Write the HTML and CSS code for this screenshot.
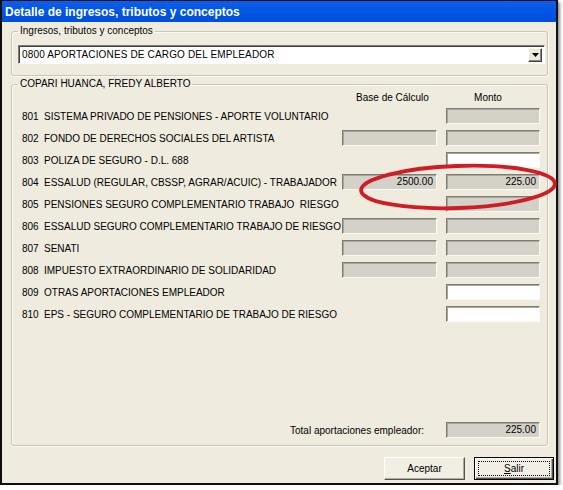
FILE: index.html
```html
<!DOCTYPE html>
<html lang="es">
<head>
<meta charset="utf-8">
<title>Detalle de ingresos, tributos y conceptos</title>
<link rel="stylesheet" href="styles.css">
</head>
<body>
<div class="window">
  <div class="titlebar"><span class="title">Detalle de ingresos, tributos y conceptos</span></div>
  <div class="client">
    <fieldset class="group g1">
      <legend>Ingresos, tributos y conceptos</legend>
      <div class="combo">
        <span class="combo-text">0800 APORTACIONES DE CARGO DEL EMPLEADOR</span>
        <span class="combo-btn"><svg width="7" height="4" viewBox="0 0 7 4"><path d="M0 0h7L3.5 4z" fill="#000"/></svg></span>
      </div>
    </fieldset>
    <fieldset class="group g2">
      <legend>COPARI HUANCA, FREDY ALBERTO</legend>
      <div class="grid head">
        <span></span><span></span>
        <span class="h-base">Base de Cálculo</span>
        <span class="h-monto">Monto</span>
      </div>
      <div class="grid row"><span>801</span><span>SISTEMA PRIVADO DE PENSIONES - APORTE VOLUNTARIO</span><span></span><span class="fld grey"></span></div>
      <div class="grid row"><span>802</span><span>FONDO DE DERECHOS SOCIALES DEL ARTISTA</span><span class="fld grey base"></span><span class="fld grey"></span></div>
      <div class="grid row"><span>803</span><span>POLIZA DE SEGURO - D.L. 688</span><span></span><span class="fld white"></span></div>
      <div class="grid row"><span>804</span><span>ESSALUD (REGULAR, CBSSP, AGRAR/ACUIC) - TRABAJADOR</span><span class="fld grey base">2500.00</span><span class="fld grey">225.00</span></div>
      <div class="grid row"><span>805</span><span>PENSIONES SEGURO COMPLEMENTARIO TRABAJO&nbsp; RIESGO</span><span></span><span class="fld grey"></span></div>
      <div class="grid row"><span>806</span><span>ESSALUD SEGURO COMPLEMENTARIO TRABAJO DE RIESGO</span><span class="fld grey base"></span><span class="fld grey"></span></div>
      <div class="grid row"><span>807</span><span>SENATI</span><span class="fld grey base"></span><span class="fld grey"></span></div>
      <div class="grid row"><span>808</span><span>IMPUESTO EXTRAORDINARIO DE SOLIDARIDAD</span><span class="fld grey base"></span><span class="fld grey"></span></div>
      <div class="grid row"><span>809</span><span>OTRAS APORTACIONES EMPLEADOR</span><span></span><span class="fld white"></span></div>
      <div class="grid row"><span>810</span><span>EPS - SEGURO COMPLEMENTARIO DE TRABAJO DE RIESGO</span><span></span><span class="fld white"></span></div>
      <div class="total">
        <span class="total-label">Total aportaciones empleador:</span>
        <span class="fld grey total-fld">225.00</span>
      </div>
    </fieldset>
    <div class="buttons">
      <button class="btn">Aceptar</button>
      <button class="btn default"><span class="focus"><u>S</u>alir</span></button>
    </div>
  </div>
  <svg class="mark" width="212" height="56" viewBox="0 0 212 56"><ellipse cx="105" cy="28" rx="97" ry="21" transform="rotate(-2 105 28)" fill="none" stroke="#d01c24" stroke-width="3.8"/></svg>
</div>
</body>
</html>
```
FILE: styles.css
```css
html, body {
  margin: 0;
  padding: 0;
  background: #ffffff;
}
body {
  font-family: "Liberation Sans", Arial, sans-serif;
  font-size: 10px;
  color: #000;
}
.window {
  position: relative;
  width: 554px;
  height: 482px;
  border: 2px solid #101010;
  border-top-width: 1px;
  background: #efebde;
  box-shadow: 2px 2px 3px rgba(0, 0, 0, 0.45);
  display: flex;
  flex-direction: column;
}
.titlebar {
  height: 21px;
  background: linear-gradient(#0b5fea, #0054e2 60%, #0050da);
  display: flex;
  align-items: center;
  padding-left: 3px;
}
.title {
  color: #fff;
  font-weight: bold;
  font-size: 12px;
  line-height: 14px;
}
.client {
  flex: 1;
  padding: 3px 0 0 9px;
  display: flex;
  flex-direction: column;
}
.group {
  box-sizing: border-box;
  width: 537px;
  margin: 0;
  min-width: 0;
  border: 1px solid #c9c6b6;
  border-radius: 3px;
  box-shadow: inset 1px 1px 0 #fbfaf6, 1px 1px 0 #fbfaf6;
}
.group legend {
  padding: 0 2px;
  font-size: 10px;
  line-height: 12px;
}
.g1 {
  padding: 8px 0 11px 6px;
}
.g1 legend {
  margin-left: 0;
}
.combo {
  box-sizing: border-box;
  width: 527px;
  height: 19px;
  background: #fff;
  border-top: 1px solid #7f7d76;
  border-left: 1px solid #7f7d76;
  border-right: 1px solid #fff;
  border-bottom: 1px solid #fff;
  box-shadow: inset 1px 1px 0 #3f3f3f;
  display: flex;
  align-items: center;
  justify-content: space-between;
  padding: 0 2px 0 3px;
}
.combo-text {
  line-height: 12px;
  letter-spacing: 0.15px;
}
.combo-btn {
  box-sizing: border-box;
  width: 14px;
  height: 14px;
  background: #ece9d8;
  border-top: 1px solid #fff;
  border-left: 1px solid #fff;
  border-right: 1px solid #404040;
  border-bottom: 1px solid #404040;
  box-shadow: inset -1px -1px 0 #8d8a80;
  display: flex;
  align-items: center;
  justify-content: center;
}
.g2 {
  margin-top: 2px;
  padding: 0 0 7px 10px;
}
.g2 legend {
  margin-left: -4px;
}
.grid {
  display: grid;
  grid-template-columns: 22px 298px 104px 94px;
  align-items: center;
  white-space: nowrap;
}
.head {
  height: 15px;
}
.h-base {
  width: 95px;
  text-align: center;
  padding-left: 6px;
  box-sizing: border-box;
}
.h-monto {
  text-align: center;
  padding-right: 10px;
}
.row {
  height: 22px;
}
.fld {
  box-sizing: border-box;
  display: block;
  height: 16px;
  border-top: 1px solid #7d7b74;
  border-left: 1px solid #7d7b74;
  border-right: 1px solid #fbfaf6;
  border-bottom: 1px solid #fbfaf6;
  box-shadow: inset 1px 1px 0 #a9a69c;
  text-align: right;
  padding: 0 3px 0 0;
  line-height: 14px;
}
.fld.base {
  width: 95px;
}
.grey {
  background: #d4d1c9;
}
.white {
  background: #fff;
}
.total {
  margin-top: 97px;
  display: flex;
  justify-content: flex-end;
  align-items: center;
  width: 518px;
  height: 16px;
}
.total-label {
  margin-right: 22px;
}
.total-fld {
  width: 94px;
}
.buttons {
  margin-top: 11px;
  display: flex;
  justify-content: flex-end;
  gap: 9px;
  padding-right: 2px;
}
.btn {
  box-sizing: border-box;
  width: 81px;
  height: 23px;
  font-family: "Liberation Sans", Arial, sans-serif;
  font-size: 10px;
  color: #000;
  background: #f1eee4;
  border-top: 1px solid #fff;
  border-left: 1px solid #fff;
  border-right: 1px solid #55534d;
  border-bottom: 1px solid #55534d;
  box-shadow: inset -1px -1px 0 #aeaa9e;
  padding: 0;
}
.btn.default {
  width: 80px;
  border: 1px solid #000;
  box-shadow: inset 1px 1px 0 #fff, inset -1px -1px 0 #55534d, inset -2px -2px 0 #aeaa9e;
  padding: 3px;
}
.focus {
  display: flex;
  align-items: center;
  justify-content: center;
  height: 100%;
  border: 1px dotted #000;
  box-sizing: border-box;
}
.mark {
  position: absolute;
  left: 351px;
  top: 158px;
}
```
